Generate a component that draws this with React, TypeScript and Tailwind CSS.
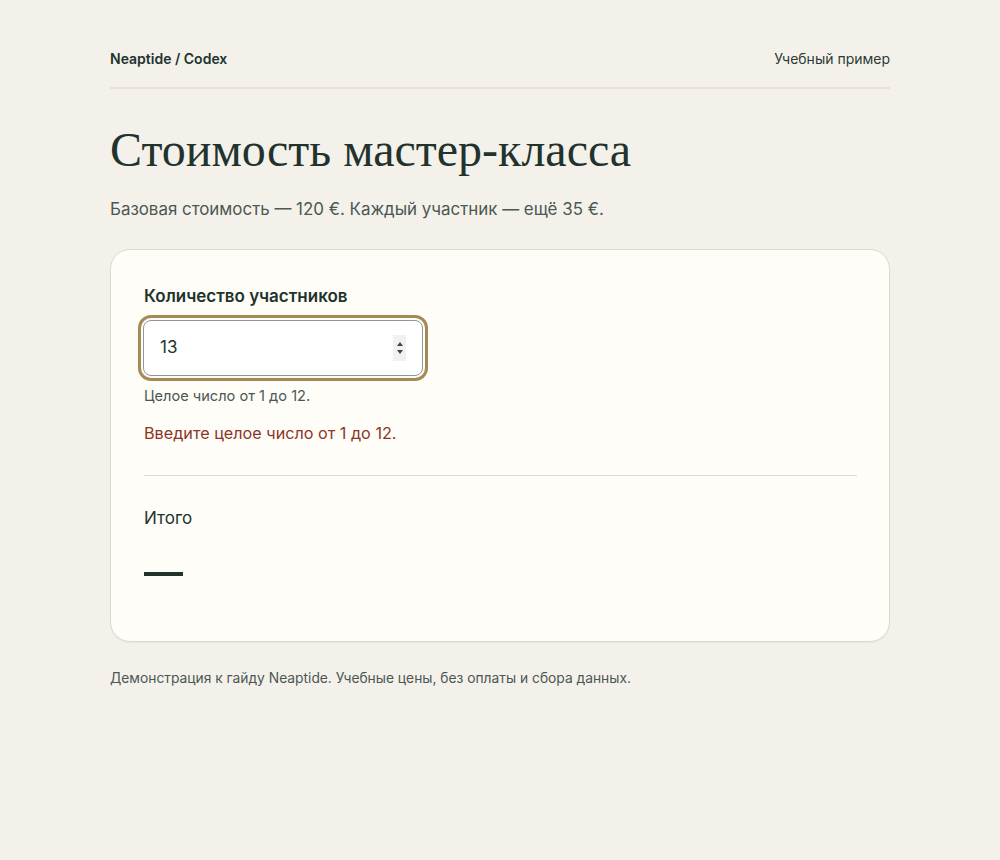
import React from "react";

export default function App() {
  return (
    <div className="min-h-[860px] w-full bg-[#f4f1eb] text-[#22332e]" style={{ fontFamily: "Inter, 'Noto Sans', sans-serif" }}>
      <div className="mx-auto w-[780px] pt-[48px]">
        <header className="flex items-center justify-between border-b-2 border-[#e6e2da] pb-[17px]">
          <div className="text-[14px] font-semibold leading-[22px]">Neaptide / Codex</div>
          <div className="text-[14px] leading-[22px] text-[#2c3a36]">Учебный пример</div>
        </header>
        <h1 className="mt-[33px] text-[48px] leading-[56px] text-[#22332e]" style={{ fontFamily: "'Liberation Serif', 'DejaVu Serif', serif" }}>
          Стоимость мастер-класса
        </h1>
        <p className="mt-[18px] text-[16.9px] leading-[26px] text-[#4b5753]">
          Базовая стоимость — 120 €. Каждый участник — ещё 35 €.
        </p>
        <div className="mt-[27px] rounded-[20px] border border-[#dcd9d1] bg-[#fefdf8] px-[32px] pb-[65px] pt-[34px] shadow-[0_1px_2px_rgba(0,0,0,0.04)]">
          <label className="block pl-[1px] text-[17px] font-semibold leading-[24px]">Количество участников</label>
          <div className="mt-[12px] w-[280px]">
            <div className="flex h-[56px] items-center justify-between rounded-[8px] border border-[#8c9a95] bg-white pl-[16px] pr-[16px] outline outline-[3px] outline-offset-[2px] outline-[#a68a55]">
              <span className="text-[17px]">13</span>
              <span className="flex h-[26px] w-[13px] flex-col items-center justify-center gap-[4px] bg-[#f1f1f1]">
                <svg width="6" height="4" viewBox="0 0 6 4"><path d="M0 4 L3 0 L6 4 Z" fill="#444" /></svg>
                <svg width="6" height="4" viewBox="0 0 6 4"><path d="M0 0 L3 4 L6 0 Z" fill="#444" /></svg>
              </span>
            </div>
          </div>
          <p className="mt-[10px] pl-[1px] text-[14.6px] leading-[20px] text-[#4b5753]">Целое число от 1 до 12.</p>
          <p className="mt-[15px] pl-[1px] text-[16.2px] leading-[24px] text-[#8b3528]">Введите целое число от 1 до 12.</p>
          <div className="mt-[30px] ml-[1px] border-t border-[#dedad2]" />
          <p className="mt-[29px] pl-[1px] text-[17px] leading-[26px]">Итого</p>
          <div className="ml-[1px] mt-[41px] h-[4px] w-[39px] bg-[#22332e]" />
        </div>
        <p className="mt-[26px] text-[13.8px] leading-[20px] text-[#4b5753]">
          Демонстрация к гайду Neaptide. Учебные цены, без оплаты и сбора данных.
        </p>
      </div>
    </div>
  );
}
